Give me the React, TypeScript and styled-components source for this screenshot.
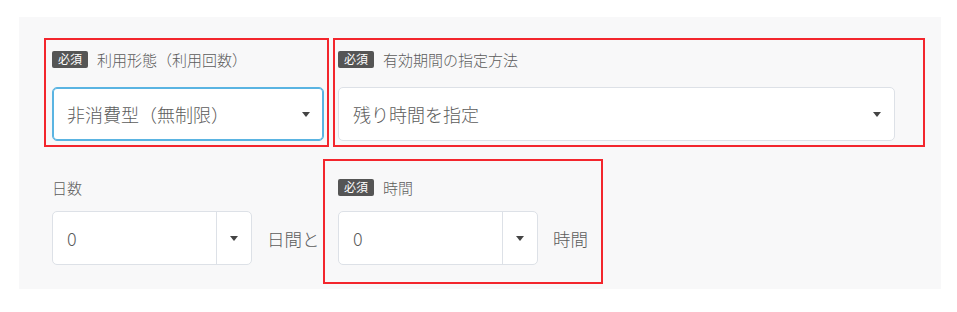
import { FC, ReactNode } from "react";
import styled, { createGlobalStyle } from "styled-components";

const GlobalStyle = createGlobalStyle`
  body {
    margin: 0;
    background: #fff;
    font-family: "Noto Sans CJK JP", "Noto Sans", sans-serif;
  }
`;

type TInset = { top: number; right: number; bottom: number; left: number };

type TField = {
  label: string;
  required?: boolean;
  gap: number;
  fit?: boolean;
  mark?: TInset;
  children: ReactNode;
};

const Field: FC<TField> = ({ label, required, gap, fit, mark, children }) => (
  <FieldBox $mark={mark} $fit={fit}>
    <Label $gap={gap}>
      {required && <Badge>必須</Badge>}
      <span>{label}</span>
    </Label>
    {children}
  </FieldBox>
);

type TSelect = {
  value: string;
  focused?: boolean;
  compact?: boolean;
};

const Select: FC<TSelect> = ({ value, focused, compact }) => (
  <SelectBox $focused={focused} $compact={compact}>
    <div className="value">{value}</div>
    <div className="arrow">
      <svg width="8" height="5" viewBox="0 0 8 5">
        <path d="M0 0 L8 0 L4 5 Z" fill="#444" />
      </svg>
    </div>
  </SelectBox>
);

const App: FC = () => {
  return (
    <Page>
      <GlobalStyle />
      <Panel>
        <Grid>
          <Field
            label="利用形態（利用回数）"
            required
            gap={17}
            mark={{ top: -10, right: -5, bottom: -6, left: -8 }}
          >
            <Select value="非消費型（無制限）" focused />
          </Field>
          <Field
            label="有効期間の指定方法"
            required
            gap={17}
            mark={{ top: -10, right: -30, bottom: -6, left: -5 }}
          >
            <Select value="残り時間を指定" />
          </Field>
        </Grid>
        <Grid className="second">
          <Field label="日数" gap={13}>
            <InputRow>
              <Select value="0" compact />
              <Unit>日間と</Unit>
            </InputRow>
          </Field>
          <Field
            label="時間"
            required
            gap={13}
            fit
            mark={{ top: -17, right: -15, bottom: -19, left: -15 }}
          >
            <InputRow>
              <Select value="0" compact />
              <Unit>時間</Unit>
            </InputRow>
          </Field>
        </Grid>
      </Panel>
    </Page>
  );
};

export default App;

const Page = styled.div`
  padding: 17px 16px 0 19px;
`;

const Panel = styled.div`
  width: 922px;
  height: 272px;
  box-sizing: border-box;
  padding: 31px 0 0 33px;
  background: #f8f8f9;
`;

const Grid = styled.div`
  display: grid;
  grid-template-columns: 272px 557px;
  column-gap: 14px;
  align-items: start;
  &.second {
    margin-top: 35px;
  }
`;

const FieldBox = styled.div<{ $mark?: TInset; $fit?: boolean }>`
  position: relative;
  display: flex;
  flex-direction: column;
  justify-self: ${({ $fit }) => ($fit ? "start" : "stretch")};
  ${({ $mark }) =>
    $mark &&
    `
    &::after {
      content: "";
      position: absolute;
      top: ${$mark.top}px;
      right: ${$mark.right}px;
      bottom: ${$mark.bottom}px;
      left: ${$mark.left}px;
      border: 2px solid #f3262d;
      pointer-events: none;
    }
  `}
`;

const Label = styled.div<{ $gap: number }>`
  display: flex;
  align-items: center;
  gap: 9px;
  height: 22px;
  margin-bottom: ${({ $gap }) => $gap}px;
  font-size: 15px;
  font-weight: 300;
  color: #5c5c5c;
`;

const Badge = styled.span`
  display: inline-flex;
  align-items: center;
  height: 17px;
  padding: 0 6px;
  border-radius: 2px;
  background: #555;
  color: #fff;
  font-size: 12px;
  font-weight: 400;
  line-height: 1;
`;

const SelectBox = styled.div<{ $focused?: boolean; $compact?: boolean }>`
  display: flex;
  align-items: center;
  width: ${({ $compact }) => ($compact ? "200px" : "auto")};
  height: 54px;
  box-sizing: border-box;
  background: #fff;
  border: 1px solid ${({ $focused }) => ($focused ? "#5ab4e2" : "#dde1e7")};
  box-shadow: ${({ $focused }) => ($focused ? "inset 0 0 0 1px #5ab4e2" : "none")};
  border-radius: 5px;
  color: #5c5c5c;
  font-size: 18px;
  font-weight: 300;
  > .value {
    flex: 1;
    padding-left: 14px;
    white-space: nowrap;
  }
  > .arrow {
    display: flex;
    align-items: center;
    justify-content: center;
    align-self: stretch;
    width: 34px;
    border-left: ${({ $compact }) => ($compact ? "1px solid #dde1e7" : "none")};
  }
`;

const InputRow = styled.div`
  display: flex;
  align-items: center;
  gap: 15px;
`;

const Unit = styled.span`
  font-size: 17.5px;
  font-weight: 300;
  color: #5c5c5c;
  white-space: nowrap;
`;
